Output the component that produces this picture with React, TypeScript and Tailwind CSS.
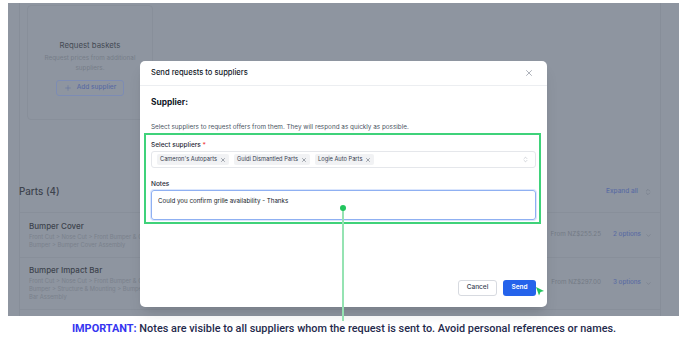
import { ChevronDown, ChevronsUpDown, Plus, X } from "lucide-react";

const parts = [
  {
    name: "Bumper Cover",
    crumbs: ["Front Cut > Nose Cut > Front Bumper & Grille >", "Bumper > Bumper Cover Assembly"],
    price: "From NZ$255.25",
    options: "2 options",
  },
  {
    name: "Bumper Impact Bar",
    crumbs: ["Front Cut > Nose Cut > Front Bumper & Grille >", "Bumper > Structure & Mounting > Bumper Impact", "Bar Assembly"],
    price: "From NZ$297.00",
    options: "3 options",
  },
];

const suppliers = ["Cameron's Autoparts", "Guidi Dismantled Parts", "Logie Auto Parts"];

export default function App() {
  return (
    <div className="relative w-[688px] h-[343px] overflow-hidden bg-white font-['Inter',sans-serif]">
      {/* dimmed page behind the dialog */}
      <div className="ml-[8px] mt-[3px] w-[671px] h-[313px] bg-[#8e95a0] flex">
        <div className="w-[12px] border-r border-[#878e99]" />
        <div className="w-[641px] border-r border-[#878e99] flex flex-col">
          <div className="ml-[7px] mt-[2px] w-[126px] h-[115px] border border-[#888f9a] rounded-[4px] flex flex-col items-center pt-[34px]">
            <p className="text-[7.8px] leading-[10px] text-[#454b55]">Request baskets</p>
            <p className="mt-[3px] text-[6.3px] leading-[10px] text-[#767d88] text-center">
              Request prices from additional
              <br />
              suppliers.
            </p>
            <div className="mt-[7px] w-[68px] h-[16px] border border-[#7d8cb4] rounded-[3px] flex items-center justify-center gap-[5px] text-[6.5px] font-medium text-[#5a6ca3]">
              <Plus size={8} strokeWidth={1.5} />
              Add supplier
            </div>
          </div>

          <div className="mt-[62px] h-[20px] flex items-center justify-between pr-[8px]">
            <span className="-ml-px text-[9.8px] font-medium text-[#3d434d]">Parts (4)</span>
            <span className="flex items-center gap-[6px] text-[6.5px] font-medium text-[#5a6ca3]">
              Expand all
              <ChevronsUpDown size={8} strokeWidth={1.5} className="text-[#6b7280]" />
            </span>
          </div>

          <div className="mt-[10px] border-t border-[#888f9a]">
            {parts.map((p, i) => (
              <div
                key={p.name}
                className={`flex items-center justify-between pl-[9px] pr-[8px] border-b border-[#888f9a] ${i === 0 ? "pt-[8px] pb-[8px]" : "pt-[7px] pb-[8px]"}`}
              >
                <div>
                  <p className="text-[8px] leading-[10px] font-medium text-[#3d434d]">{p.name}</p>
                  <div className="mt-[2px]">
                    {p.crumbs.map((c) => (
                      <p key={c} className="text-[5.8px] leading-[8px] text-[#7a818c]">
                        {c}
                      </p>
                    ))}
                  </div>
                </div>
                <div className="flex items-center text-[6.3px]">
                  <span className="text-[#737a85]">{p.price}</span>
                  <span className="ml-[12px] font-medium text-[#5a6ca3]">{p.options}</span>
                  <ChevronDown size={7} strokeWidth={1.5} className="ml-[4px] text-[#6b7280]" />
                </div>
              </div>
            ))}
          </div>
        </div>
      </div>

      {/* dialog */}
      <div className="absolute left-[140px] top-[61px] w-[407px] h-[246px] bg-white rounded-[5px] shadow-lg flex flex-col">
        <div className="h-[25px] px-[11px] flex items-center justify-between border-b border-[#eceef1]">
          <span className="text-[7.6px] font-medium text-[#111827]">Send requests to suppliers</span>
          <X size={10} strokeWidth={1.3} className="mr-[2px] text-[#6b7280]" />
        </div>
        <div className="flex-1 px-[11px] flex flex-col">
          <p className="mt-[11px] text-[8.4px] leading-[10px] font-bold text-[#111827]">Supplier:</p>
          <p className="mt-[16px] text-[6.35px] leading-[8px] text-[#4b5563]">
            Select suppliers to request offers from them. They will respond as quickly as possible.
          </p>
          <p className="mt-[10px] text-[6.5px] leading-[8px] font-medium text-[#1f2937]">
            Select suppliers <span className="text-[#ef4444]">*</span>
          </p>
          <div className="mt-[2px] h-[17px] border border-[#e5e7eb] rounded-[3px] flex items-center pl-[5px] pr-[6px]">
            <div className="flex-1 flex items-center gap-[5px]">
              {suppliers.map((s) => (
                <span
                  key={s}
                  className="h-[11px] px-[3px] rounded-[2px] bg-[#f1f2f4] flex items-center gap-[3px] text-[5.7px] text-[#374151]"
                >
                  {s}
                  <X size={6} strokeWidth={2} className="text-[#4b5563]" />
                </span>
              ))}
            </div>
            <ChevronsUpDown size={7} strokeWidth={1.5} className="text-[#9ca3af]" />
          </div>
          <p className="mt-[12px] text-[6.5px] leading-[8px] font-medium text-[#1f2937]">Notes</p>
          <div className="mt-[2px] h-[30px] border border-[#8fb0f2] rounded-[3px] px-[6px] pt-[5px] text-[6.2px] leading-[9px] text-[#111827] shadow-[0_0_0_1px_#dbe6fd]">
            Could you confirm grille availability - Thanks
          </div>
          <div className="mt-auto mb-[11px] flex justify-end gap-[6px]">
            <button className="w-[39px] h-[16px] border border-[#d7dae0] rounded-[3px] bg-white text-[6.5px] font-medium text-[#374151]">
              Cancel
            </button>
            <button className="w-[33px] h-[16px] rounded-[3px] bg-[#2563eb] text-[6.5px] font-semibold text-white">
              Send
            </button>
          </div>
        </div>
      </div>

      {/* annotation overlay */}
      <div className="absolute left-[144px] top-[133px] w-[397px] h-[91px] border-2 border-[#3fd27a]" />
      <div className="absolute left-[342px] top-[208px] w-[2px] h-[113px] bg-[#95e3b2]" />
      <div className="absolute left-[340px] top-[205px] w-[6px] h-[6px] rounded-full bg-[#22c55e]" />
      <svg className="absolute left-[536px] top-[287px]" width="9" height="9" viewBox="0 0 9 9">
        <polygon points="0,0 8,4 4.5,5 3,8.5" fill="#22c55e" />
      </svg>

      <p className="mt-[5px] text-center text-[10.9px] leading-[16px] font-medium text-[#1f2a4c] font-['Roboto',sans-serif]">
        <span className="font-bold text-[#3535f0]">IMPORTANT:</span> Notes are visible to all suppliers whom the request is sent to. Avoid personal references or names.
      </p>
    </div>
  );
}
